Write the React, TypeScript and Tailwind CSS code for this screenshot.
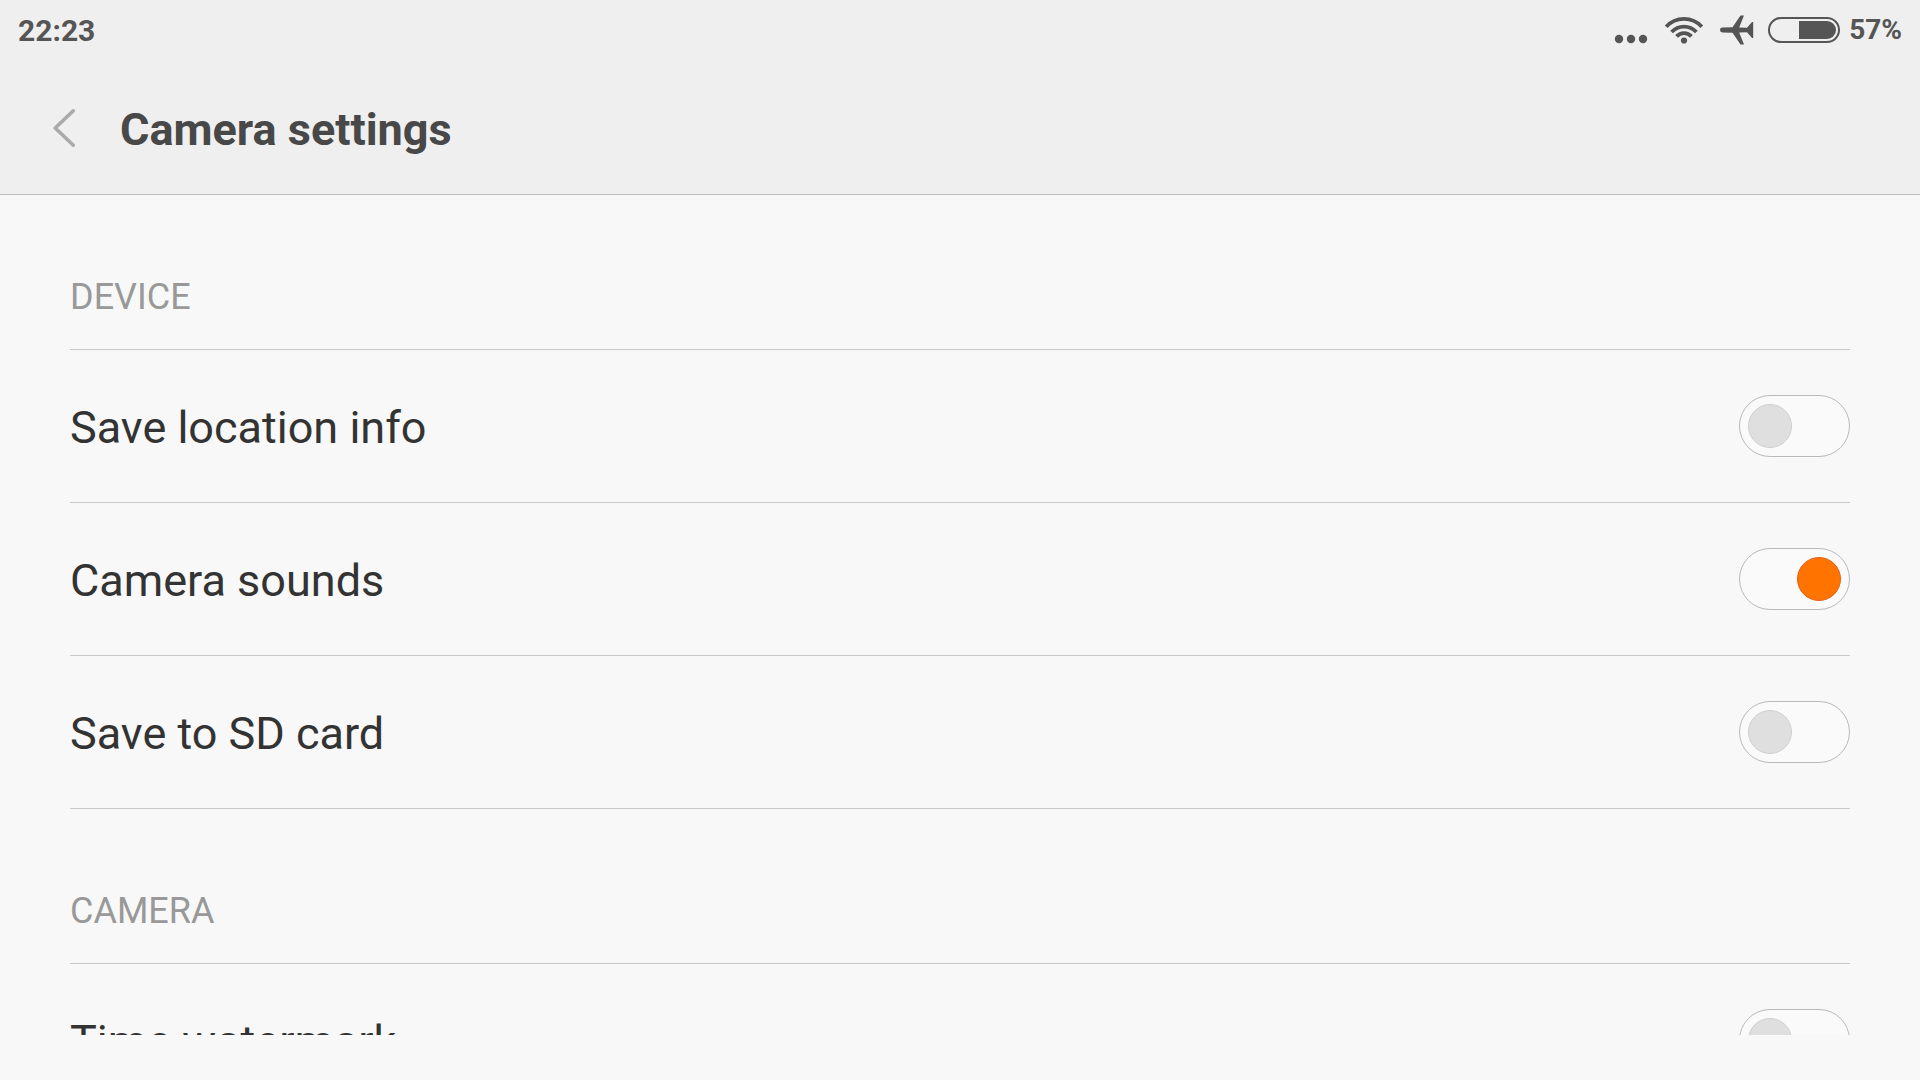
import { useState } from 'react';

interface Setting {
  id: string;
  label: string;
  enabled: boolean;
}

interface Section {
  title: string;
  settings: Setting[];
}

const sections: Section[] = [
  {
    title: 'DEVICE',
    settings: [
      { id: 'location', label: 'Save location info', enabled: false },
      { id: 'sounds', label: 'Camera sounds', enabled: true },
      { id: 'sd-card', label: 'Save to SD card', enabled: false },
    ],
  },
  {
    title: 'CAMERA',
    settings: [{ id: 'watermark', label: 'Time watermark', enabled: false }],
  },
];

function WifiIcon() {
  return (
    <svg width="40" height="30" viewBox="0 0 40 30" fill="none" stroke="currentColor" strokeWidth="3.8" aria-hidden="true">
      <path d="M2.2 11.8A24 24 0 0 1 37.8 11.8" />
      <path d="M7.6 17A16.8 16.8 0 0 1 32.4 17" />
      <path d="M12.6 21.4A10 10 0 0 1 27.4 21.4" />
      <circle cx="20" cy="25.5" r="3.1" fill="currentColor" stroke="none" />
    </svg>
  );
}

function PlaneIcon() {
  return (
    <svg width="34" height="30" viewBox="0 0 34 30" fill="currentColor" aria-hidden="true">
      <path d="M2.4 12.6L12.5 12.2L20.5 .4H24L19.2 12.4L27 12.8L32 7H33.2V23H32L27 17.2L19.2 17.6L24 29.6H20.5L12.5 17.8L2.4 17.4A2.4 2.4 0 0 1 2.4 12.6Z" />
    </svg>
  );
}

function StatusBar() {
  return (
    <div className="flex h-[60px] items-center justify-between px-[18px] font-bold text-[#555]">
      <time className="text-[30px]">22:23</time>
      <div className="flex items-center">
        <svg width="34" height="30" viewBox="0 0 34 30" fill="currentColor" aria-hidden="true">
          <circle cx="5" cy="24" r="4.2" />
          <circle cx="17" cy="24" r="4.2" />
          <circle cx="29" cy="24" r="4.2" />
        </svg>
        <div className="ml-4"><WifiIcon /></div>
        <div className="ml-4"><PlaneIcon /></div>
        <div className="ml-[14px] flex h-[26px] w-[72px] justify-end rounded-full border-2 border-[#555] p-[2px]">
          <div className="w-[37px] rounded-r-full bg-[#555]" />
        </div>
        <span className="ml-[9px] text-[28px]">57%</span>
      </div>
    </div>
  );
}

function SettingRow({ setting }: { setting: Setting }) {
  const [enabled, setEnabled] = useState(setting.enabled);

  return (
    <div className="flex h-[153px] items-center justify-between border-b border-[#c8c8c8]">
      <label htmlFor={setting.id} className="pt-[3px] text-[45px] leading-[60px] text-[#333]">
        {setting.label}
      </label>
      <input
        id={setting.id}
        type="checkbox"
        role="switch"
        checked={enabled}
        onChange={(e) => setEnabled(e.target.checked)}
        className="flex h-[62px] w-[111px] cursor-pointer appearance-none items-center justify-start rounded-full border border-[#b9b9b9] bg-[#fafafa] px-2 before:size-11 before:rounded-full before:border before:border-[#cfcfcf] before:bg-[#dfdfdf] before:content-[''] checked:justify-end checked:before:border-[#e8601a] checked:before:bg-[#ff7300]"
      />
    </div>
  );
}

export default function App() {
  return (
    <div className="flex h-screen flex-col bg-[#f8f8f8] pb-[45px] font-['Roboto','Liberation_Sans',sans-serif]">
      <header className="shrink-0 border-b border-[#bdbdbd] bg-[#efefef]">
        <StatusBar />
        <div className="flex h-[134px] items-center pt-[2px] pl-[50px]">
          <button type="button" aria-label="Back" className="text-[#aaa]">
            <svg width="28" height="40" viewBox="0 0 28 40" fill="none" stroke="currentColor" strokeWidth="3.6" strokeLinecap="round" strokeLinejoin="round">
              <path d="M23.3 2.8L5.2 20L23.3 37.2" />
            </svg>
          </button>
          <h1 className="ml-[42px] pt-1 text-[45px] leading-[60px] font-bold text-[#484848]">Camera settings</h1>
        </div>
      </header>

      <main className="min-h-0 flex-1 overflow-y-auto px-[70px] [scrollbar-width:none]">
        {sections.map((section) => (
          <section key={section.title}>
            <h2 className="flex h-[155px] items-end border-b border-[#c8c8c8] pb-7 text-[36px] leading-[48px] text-[#999]">
              {section.title}
            </h2>
            {section.settings.map((setting) => (
              <SettingRow key={setting.id} setting={setting} />
            ))}
          </section>
        ))}
      </main>
    </div>
  );
}
